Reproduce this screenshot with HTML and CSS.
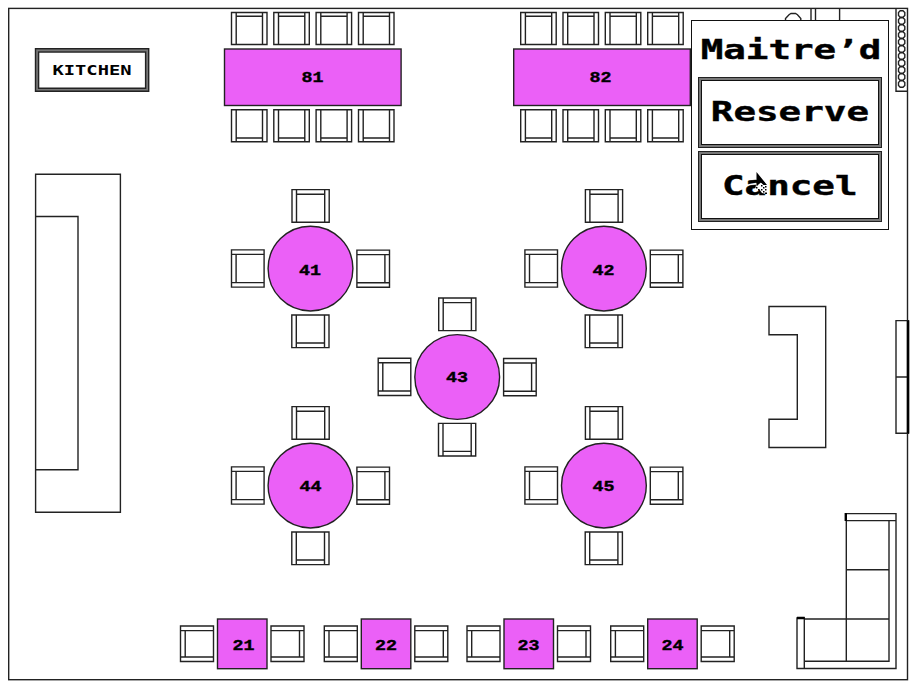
FILE: index.html
```html
<!DOCTYPE html>
<html lang="en">
<head>
<meta charset="utf-8">
<title>Maitre’d</title>
<link rel="stylesheet" href="styles.css">
</head>
<body>
<main class="room">
<svg class="plan" width="910" height="688" viewBox="0 0 910 688">
  <defs>
    <g id="chair-row">
      <path id="c" d="M0 0H35.5V32H0ZM4.7 0V32M31 0V32M4.7 3.8H31"/>
      <use href="#c" x="42.3"/><use href="#c" x="84.6"/><use href="#c" x="127"/>
    </g>
    <g id="banquet">
      <rect class="table" x="224.5" y="49" width="176.6" height="56.5"/>
      <use href="#chair-row" x="231.5" y="12.5"/>
      <use href="#chair-row" transform="translate(231.5 141.8) scale(1 -1)"/>
    </g>
    <path id="armchair" d="M-18.5 -79H18.7V-46.4H-18.5ZM-14 -79V-46.4M14.2 -79V-46.4M-14 -74.4H14.2"/>
    <g id="round">
      <circle class="table" r="42.4"/>
      <use href="#armchair"/>
      <use href="#armchair" transform="rotate(90)"/>
      <use href="#armchair" transform="rotate(180)"/>
      <use href="#armchair" transform="rotate(270)"/>
    </g>
    <g id="duo">
      <rect class="table" x="217.5" y="619" width="49.5" height="49.7"/>
      <path d="M180.5 626H213.5V661.5H180.5ZM180.5 630.6H213.5M180.5 657H213.5M185.2 630.6V657M271 626H304V661.5H271ZM271 630.6H304M271 657H304M299.5 630.6V657"/>
    </g>
  </defs>

  <rect x="8.7" y="8.4" width="898.8" height="671.3"/>
  <use href="#banquet"/><use href="#banquet" x="289.2"/>
  <use href="#round" x="310.5" y="268.6"/><use href="#round" x="603.9" y="268.6"/>
  <use href="#round" x="457.2" y="377"/>
  <use href="#round" x="310.5" y="485.6"/><use href="#round" x="603.9" y="485.6"/>
  <use href="#duo"/><use href="#duo" x="143.8"/><use href="#duo" x="286.5"/><use href="#duo" x="430.2"/>

  <!-- kitchen sign -->
  <rect class="sign" x="37" y="50.4" width="110.3" height="39.3"/>
  <path d="M35.5 48.8H148.7V91.3H35.5ZM38.6 52H145.6V88.2H38.6Z"/>

  <!-- bar and host counter -->
  <path d="M35.6 174.2H120.4V512.2H35.6ZM35.6 216.5H78V469.7H35.6"/>
  <path d="M769 306.5H825.7V447.5H769V419.2H797.3V334.7H769Z"/>

  <!-- doors -->
  <path d="M896 320.6H908.5V433.3H896ZM896 377H908.5"/>
  <path class="thick" d="M908 320.6V433.3"/>

  <!-- corner sofa -->
  <path d="M846.3 513.6H896V668.5H797V618H804.3V668.5M846.3 520.6H896M846.3 513.6V661.3M889 520.6V661.3H804.3M846.3 569.7H889M804.3 619H889"/>
  <path class="thick" d="M845.8 513V521M797 618H804.7"/>

  <!-- top wall fixtures -->
  <path d="M785.5 22V18.5L789 14.7L791 13.5H795.5L797.5 14.7L800.8 18.5V22M811 8.4V21M815.5 8.4V21M839.6 8.4V21"/>
  <path d="M896 8.4V91.2H907.5"/>
  <g>
    <path id="bead" d="M900.2 10.8H903L904.8 12.5V15.4L903 17.2H900.2L898.5 15.4V12.5Z"/>
    <use href="#bead" y="7"/><use href="#bead" y="14"/><use href="#bead" y="21"/><use href="#bead" y="28"/><use href="#bead" y="35"/><use href="#bead" y="42"/><use href="#bead" y="49"/><use href="#bead" y="56"/><use href="#bead" y="63"/><use href="#bead" y="70"/>
  </g>

  <g class="labels">
    <text x="52.5" y="75" textLength="79" lengthAdjust="spacingAndGlyphs">KITCHEN</text>
    <g class="numbers">
      <text x="301.5" y="82" textLength="22" lengthAdjust="spacingAndGlyphs">81</text>
      <text x="589.5" y="82" textLength="22" lengthAdjust="spacingAndGlyphs">82</text>
      <text x="299" y="275" textLength="22" lengthAdjust="spacingAndGlyphs">41</text>
      <text x="592.5" y="275" textLength="22" lengthAdjust="spacingAndGlyphs">42</text>
      <text x="446" y="382" textLength="22" lengthAdjust="spacingAndGlyphs">43</text>
      <text x="299.5" y="490.5" textLength="22" lengthAdjust="spacingAndGlyphs">44</text>
      <text x="592.5" y="490.5" textLength="22" lengthAdjust="spacingAndGlyphs">45</text>
      <text x="232.5" y="649.5" textLength="22" lengthAdjust="spacingAndGlyphs">21</text>
      <text x="375" y="649.5" textLength="22" lengthAdjust="spacingAndGlyphs">22</text>
      <text x="517.5" y="649.5" textLength="22" lengthAdjust="spacingAndGlyphs">23</text>
      <text x="661.5" y="649.5" textLength="22" lengthAdjust="spacingAndGlyphs">24</text>
    </g>
  </g>
</svg>

<section class="panel">
  <h1 class="title"><span class="wide">Maitre’d</span></h1>
  <button class="action"><span class="face"><span class="wide">Reserve</span></span></button>
  <button class="action"><span class="face"><span class="wide">Cancel</span></span></button>
</section>

<svg class="cursor" width="16" height="26" viewBox="0 0 16 26">
  <path class="halo" d="M3 14L7 11L14 15L13 23L9 22L6 18L2 19Z"/>
  <path d="M3.5 1L14 14H10.5L8 11.5L6 13L3.5 15.5Z"/>
  <path d="M3 16h1.5v1.5H3zM5 18h1.5v1.5H5zM8 14h1.5v1.5H8zM10 16h1.5v1.5H10zM12 15h1.5v1.5H12zM8 18h1.5v1.5H8zM10 20h1.5v1.5H10zM12 18h1.5v1.5H12zM12 21.5h2V23h-2z"/>
</svg>
</main>
</body>
</html>
```
FILE: styles.css
```css
body {
  margin: 0;
  background: #fff;
  overflow: hidden;
}

.room {
  position: relative;
  width: 910px;
  height: 688px;
  font-family: "DejaVu Sans Mono", "Liberation Mono", monospace;
  font-weight: bold;
  color: #000;
}

.plan {
  display: block;
  fill: none;
  stroke: #222;
  stroke-width: 1.4;
}

.table {
  fill: #eb60f7;
}

.sign {
  stroke: #777;
  stroke-width: 2.6;
}

.thick {
  stroke: #000;
  stroke-width: 2.4;
}

.labels {
  fill: #000;
  stroke: none;
  font-size: 13.5px;
}

.numbers {
  font-family: "Liberation Mono", monospace;
  font-size: 15.5px;
  stroke: #000;
  stroke-width: 0.4;
}

.panel {
  position: absolute;
  left: 691px;
  top: 20px;
  box-sizing: border-box;
  width: 198px;
  height: 210px;
  padding: 0 6px;
  border: 1px solid #111;
  background: #fff;
  display: flex;
  flex-direction: column;
  gap: 3px;
}

.title {
  margin: 0;
  height: 53px;
  line-height: 57px;
  display: flex;
  justify-content: center;
  font-size: 27px;
}

.wide {
  display: block;
  transform: scaleX(1.39);
  -webkit-text-stroke: 0.4px #000;
}

.title .wide {
  margin-left: 2px;
}

.action {
  box-sizing: border-box;
  height: 71px;
  margin: 0;
  padding: 2px;
  border: 1px solid #222;
  background: #777;
  color: #000;
  font: bold 27px "DejaVu Sans Mono", "Liberation Mono", monospace;
}

.face {
  box-sizing: border-box;
  height: 100%;
  padding-bottom: 3px;
  border: 1px solid #111;
  background: #fff;
  display: flex;
  align-items: center;
  justify-content: center;
}

.cursor {
  position: absolute;
  left: 753px;
  top: 171px;
}

.halo {
  fill: #fff;
}
```
